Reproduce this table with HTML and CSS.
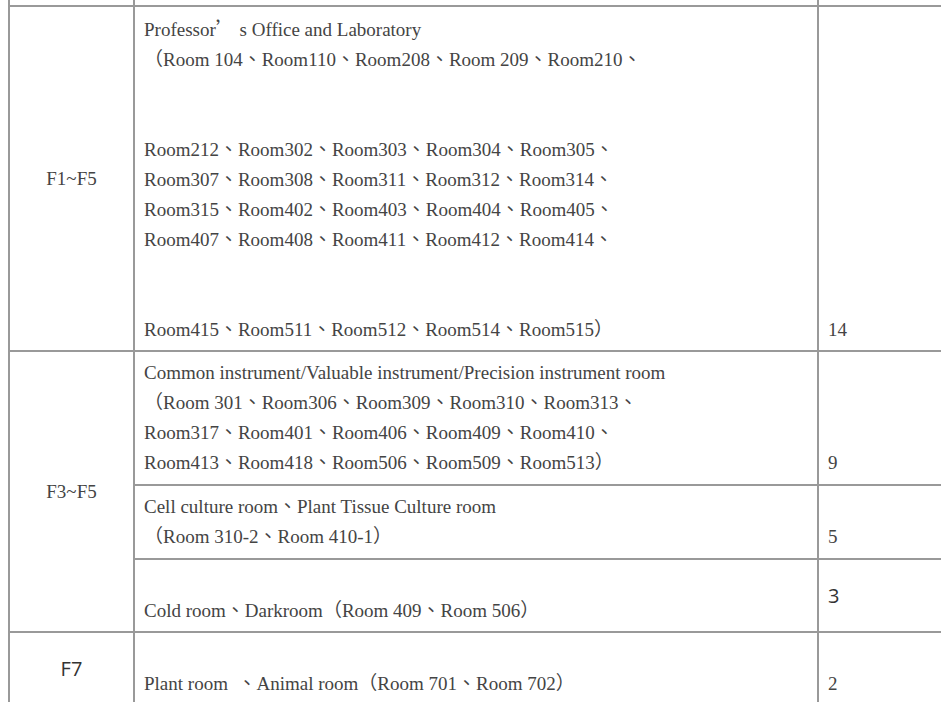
FILE: index.html
```html
<!DOCTYPE html>
<html lang="zh-TW">
<head>
<meta charset="utf-8">
<title>Laboratory rooms</title>
<link rel="stylesheet" href="styles.css">
</head>
<body>
<div class="page">
  <table class="rooms">
    <colgroup>
      <col class="c-floor">
      <col class="c-desc">
      <col class="c-count">
    </colgroup>
    <tr class="cut">
      <td></td><td></td><td></td>
    </tr>
    <tr class="pad-a">
      <td class="floor">F1~F5</td>
      <td class="desc">Professor<span class="fw">’</span> s Office and Laboratory<br>（Room 104、Room110、Room208、Room 209、Room210、<br>&nbsp;<br>&nbsp;<br>Room212、Room302、Room303、Room304、Room305、<br>Room307、Room308、Room311、Room312、Room314、<br>Room315、Room402、Room403、Room404、Room405、<br>Room407、Room408、Room411、Room412、Room414、<br>&nbsp;<br>&nbsp;<br>Room415、Room511、Room512、Room514、Room515）</td>
      <td class="count">14</td>
    </tr>
    <tr class="pad-b">
      <td class="floor" rowspan="3">F3~F5</td>
      <td class="desc">Common instrument/Valuable instrument/Precision instrument room<br>（Room 301、Room306、Room309、Room310、Room313、<br>Room317、Room401、Room406、Room409、Room410、<br>Room413、Room418、Room506、Room509、Room513）</td>
      <td class="count">9</td>
    </tr>
    <tr class="pad-b">
      <td class="desc">Cell culture room、Plant Tissue Culture room<br>（Room 310-2、Room 410-1）</td>
      <td class="count">5</td>
    </tr>
    <tr class="pad-a">
      <td class="desc">&nbsp;<br>Cold room、Darkroom（Room 409、Room 506）</td>
      <td class="count count-mid sans">3</td>
    </tr>
    <tr class="pad-a">
      <td class="floor sans">F7</td>
      <td class="desc">&nbsp;<br>Plant room &nbsp;、Animal room（Room 701、Room 702）</td>
      <td class="count">2</td>
    </tr>
  </table>
</div>
</body>
</html>
```

FILE: styles.css
```css
html, body {
  margin: 0;
  padding: 0;
  background: #ffffff;
}

.page {
  padding-left: 8px;
}

.rooms {
  border-collapse: collapse;
  table-layout: fixed;
  width: 933px;
  font-family: "Liberation Serif", "Noto Sans CJK TC", serif;
  font-size: 19px;
  line-height: 30px;
  color: #444444;
}

.c-floor { width: 125px; }
.c-desc { width: 684px; }
.c-count { width: 124px; }

.rooms td {
  border: 2px solid #999999;
  padding: 6px 9px 5px 9px;
  white-space: nowrap;
}

.rooms .cut td {
  border-top: none;
  padding: 0;
  height: 5px;
  line-height: 0;
}

.pad-b td {
  padding-bottom: 6px;
}

.floor {
  text-align: center;
  vertical-align: middle;
}

.desc {
  vertical-align: top;
}

.count {
  vertical-align: bottom;
}

.count-mid {
  vertical-align: middle;
}

.sans {
  font-family: "Open Sans", "Noto Sans", sans-serif;
  font-size: 20px;
  color: #333333;
}

.fw {
  display: inline-block;
  width: 1em;
  font-family: "Noto Sans CJK TC", sans-serif;
}
```
